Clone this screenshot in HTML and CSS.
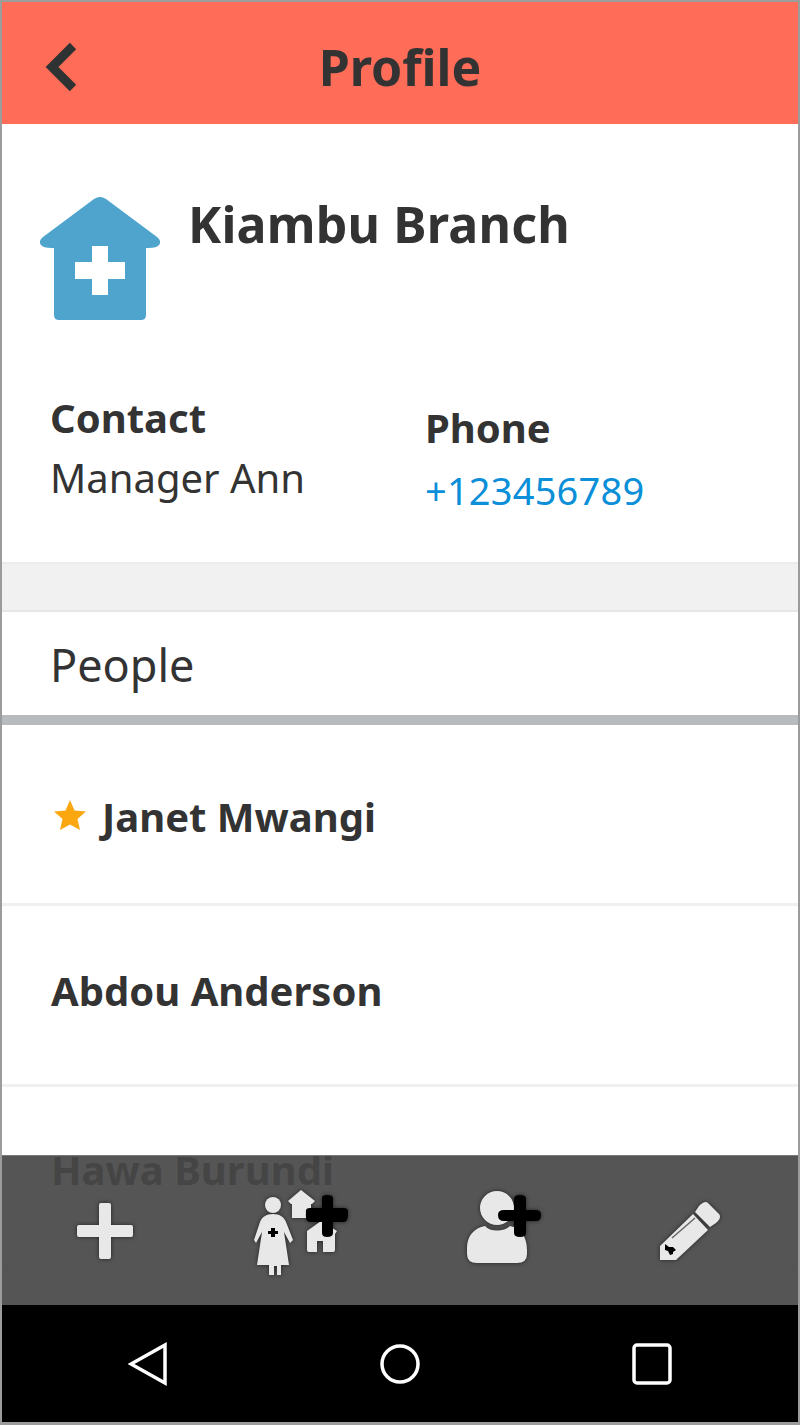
FILE: index.html
```html
<!DOCTYPE html>
<html lang="en">
<head>
  <meta charset="UTF-8">
  <title>Profile</title>
  <link rel="stylesheet" href="styles.css">
</head>
<body>
  <div class="phone">
    <div class="app">
      <header class="page-header">
        <svg class="back-icon" viewBox="0 0 34 50"><path d="M29 4 L8 25 L29 46" /></svg>
        <h1 class="page-title">Profile</h1>
      </header>

      <section class="place">
        <div class="place-head">
          <svg class="place-icon" viewBox="0 0 120 124">
            <path d="M60 0 Q63 0 66 2 L117 40 Q122 44 119 48 Q117 51 108 51 L106 51 L106 118 Q106 123 101 123 L19 123 Q14 123 14 118 L14 51 L12 51 Q3 51 1 48 Q-2 44 3 40 L54 2 Q57 0 60 0 Z" fill="#4ea4cd" />
            <path d="M52 49 H68 V65 H85 V82 H68 V98 H52 V82 H35 V65 H52 Z" fill="#fff" />
          </svg>
          <h2 class="place-name">Kiambu Branch</h2>
        </div>
        <div class="place-info">
          <div class="contact">
            <div class="info-label">Contact</div>
            <div class="info-value">Manager Ann</div>
          </div>
          <div class="phone-number">
            <div class="info-label">Phone</div>
            <a class="info-link">+123456789</a>
          </div>
        </div>
      </section>

      <div class="spacer"></div>
      <div class="section-title">People</div>

      <ul class="people">
        <li class="person">
          <svg class="star" viewBox="0 0 32 30"><path d="M16 0 L20.500 10.500 L32 11.500 L23.500 19 L26 30 L16 24.500 L6 30 L8.500 19 L0 11.500 L11.500 10.500 Z" /></svg>
          Janet Mwangi
        </li>
        <li class="person">Abdou Anderson</li>
        <li class="person">Hawa Burundi</li>
      </ul>

      <div class="actions">
        <svg class="action action-plus" viewBox="0 0 56 56">
          <path d="M22 2 Q22 0 24 0 H32 Q34 0 34 2 V22 H54 Q56 22 56 24 V32 Q56 34 54 34 H34 V54 Q34 56 32 56 H24 Q22 56 22 54 V34 H2 Q0 34 0 32 V24 Q0 22 2 22 H22 Z" />
        </svg>
        <svg class="action action-family" viewBox="0 0 96 88">
          <circle cx="21" cy="15" r="8" />
          <path d="M21 24 C28 24 32 27 34 32 L41 50 L38 53 L32 42 L37 75 H29 V85 H25 V76 H22 V85 H17 V75 H5 L10 42 L4 53 L2 50 L8 32 C10 27 14 24 21 24 Z" />
          <path d="M49 0 L63 11 L60 14 H59 V28 H40 V14 H39 L36 11 Z" />
          <path d="M69 31 L85 41 L83 44 V60 Q83 62 81 62 H71 V51 H65 V62 H57 Q55 62 55 60 V41 H55 Z" />
          <path class="dark" d="M54 23 Q53 18 58 18 H70 V8 Q70 5 75 5 Q81 5 81 8 V18 H92 Q97 18 96 24 Q96 32 92 32 H81 V43 Q81 47 75 47 Q70 47 70 43 V32 H58 Q53 32 54 23 Z" />
          <path class="dark" d="M19 38 H23 V41 H26 V44 H23 V47 H19 V44 H16 V41 H19 Z" />
        </svg>
        <svg class="action action-person" viewBox="0 0 76 76">
          <circle cx="31" cy="18" r="17" />
          <path d="M19 36 C24 42 38 42 44 36 C54 38 61 46 61 60 V64 Q61 73 51 73 H11 Q1 73 1 64 V58 C1 46 8 38 19 36 Z" />
          <path class="dark" d="M32 25 Q32 20 38 20 H48 V9 Q48 5 54 5 Q60 5 60 9 V20 H70 Q75 20 75 25 Q75 31 70 31 H60 V43 Q60 47 54 47 Q48 47 48 43 V31 H38 Q32 31 32 25 Z" />
        </svg>
        <svg class="action action-edit" viewBox="0 0 64 64">
          <path d="M41 6 Q47 0 50 3 L61 14 Q64 18 58 23 L52 27 L37 12 Z" />
          <path d="M35 14 L50 30 L18 60 L2 60 L2 46 Z" />
          <path class="dark" d="M7 44 L11 47 L15 47 L18 50 L15 52 L15 54 L12 55 L10 51 L7 50 Z" />
          <path class="edit-line" d="M14 38 L37 18" />
        </svg>
      </div>
    </div>

    <nav class="system-nav">
      <svg class="nav-icon" viewBox="0 0 40 44"><path d="M37 3 V41 L3 22 Z" /></svg>
      <svg class="nav-icon" viewBox="0 0 40 44"><circle cx="20" cy="22" r="18" /></svg>
      <svg class="nav-icon" viewBox="0 0 40 44"><rect x="2" y="3" width="36" height="38" rx="3" /></svg>
    </nav>
  </div>
</body>
</html>
```

FILE: styles.css
```css
* {
  box-sizing: border-box;
  margin: 0;
  padding: 0;
}

body {
  font-family: "Noto Sans", Arial, sans-serif;
  color: #333;
  background: #fff;
}

.phone {
  width: 800px;
  height: 1425px;
  border: 2px solid #9c9c9c;
  border-bottom-width: 3px;
  display: flex;
  flex-direction: column;
  overflow: hidden;
}

.app {
  flex: 1;
  position: relative;
  overflow: hidden;
}

.page-header {
  height: 122px;
  background-color: #ff6c58;
  display: flex;
  align-items: center;
  justify-content: center;
  position: relative;
}

.back-icon {
  position: absolute;
  left: 42px;
  top: 40px;
  width: 34px;
  height: 50px;
  fill: none;
  stroke: #2f3233;
  stroke-width: 9;
}

.page-title {
  font-size: 50px;
  font-weight: 700;
  line-height: 66px;
  margin-top: 8px;
}

.place {
  height: 440px;
  padding: 73px 0 0 38px;
  border-bottom: 2px solid #ececec;
}

.place-head {
  display: flex;
  align-items: flex-start;
}

.place-icon {
  width: 120px;
  height: 124px;
  flex-shrink: 0;
}

.place-name {
  font-size: 50px;
  font-weight: 700;
  line-height: 62px;
  letter-spacing: 0.2px;
  margin: -4px 0 0 28px;
}

.place-info {
  display: flex;
  padding: 0 0 0 10px;
  margin-top: 72px;
  align-items: flex-start;
}

.contact {
  width: 375px;
}

.phone-number {
  margin-top: 10px;
}

.info-label {
  font-size: 40px;
  font-weight: 700;
  line-height: 50px;
}

.info-value {
  font-size: 40px;
  line-height: 50px;
  margin-top: 10px;
}

.info-link {
  display: block;
  font-size: 38px;
  line-height: 50px;
  letter-spacing: 0.2px;
  margin-top: 12px;
  color: #0b8fd8;
}

.spacer {
  height: 46px;
  background-color: #f1f1f1;
}

.section-title {
  height: 115px;
  padding: 26px 0 0 48px;
  border-top: 2px solid #e6e6e6;
  border-bottom: 10px solid #b7bbbd;
  font-size: 45px;
  line-height: 54px;
}

.people {
  list-style: none;
}

.person {
  height: 181px;
  padding: 0 0 9px 49px;
  display: flex;
  align-items: center;
  gap: 16px;
  border-bottom: 3px solid #f0f0f0;
  font-size: 40px;
  font-weight: 700;
}

.person:first-child {
  padding: 7px 0 3px 49px;
}

.person:last-child {
  padding-bottom: 13px;
}

.star {
  width: 32px;
  height: 30px;
  fill: #fba70f;
  margin: -2px 0 0 3px;
}

.actions {
  position: absolute;
  left: 0;
  right: 0;
  bottom: 0;
  height: 150px;
  background-color: rgba(70, 70, 70, 0.92);
  border-top: 1px solid #777;
}

.action {
  position: absolute;
  fill: #e8e8e8;
  filter: drop-shadow(0 0 2px rgba(0, 0, 0, 0.6));
}

.action .dark {
  fill: #000;
}

.action-plus {
  left: 75px;
  top: 47px;
  width: 56px;
  height: 56px;
}

.action-family {
  left: 250px;
  top: 34px;
  width: 96px;
  height: 88px;
}

.action-person {
  left: 464px;
  top: 34px;
  width: 76px;
  height: 76px;
}

.action-edit {
  left: 656px;
  top: 44px;
  width: 64px;
  height: 64px;
}

.edit-line {
  stroke: #666;
  stroke-width: 1.5;
  fill: none;
}

.system-nav {
  height: 117px;
  background-color: #000;
  display: flex;
  justify-content: space-between;
  align-items: center;
  padding: 0 126px 0 126px;
}

.nav-icon {
  width: 40px;
  height: 44px;
  fill: none;
  stroke: #fff;
  stroke-width: 3.5;
}
```
